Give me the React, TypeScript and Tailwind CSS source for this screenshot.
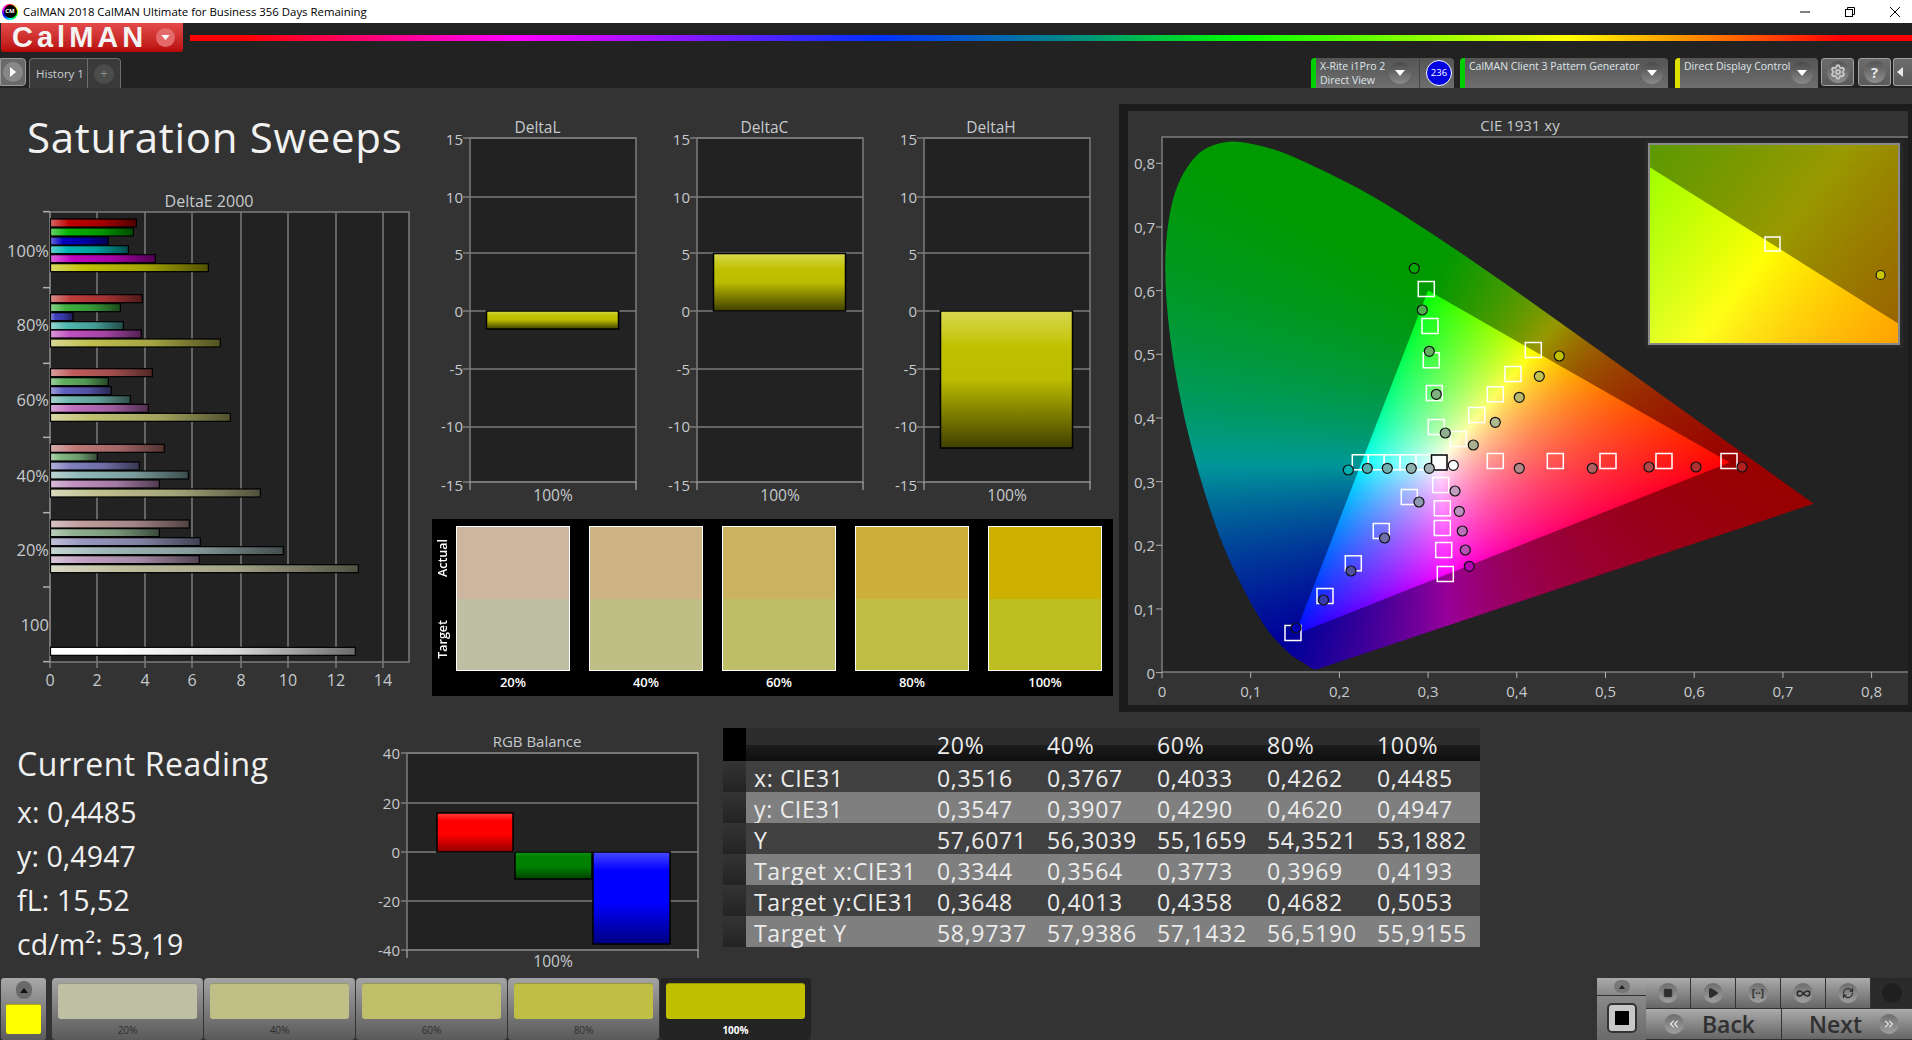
import { ChevronsLeft, ChevronsRight, Infinity as InfinityIcon, Play, RefreshCw, Settings, Square } from "lucide-react";

const TICK = "#c6cacd";
const GRID = "#7d7d7d";

// spectral locus, CIE 1931 xy
const LOCUS = [
  [0.1741, 0.005], [0.1714, 0.0051], [0.1689, 0.0069], [0.1644, 0.0109], [0.1566, 0.0177], [0.144, 0.0297],
  [0.1241, 0.0578], [0.1096, 0.0868], [0.0913, 0.1327], [0.0687, 0.2007], [0.0454, 0.295], [0.0235, 0.4127],
  [0.0082, 0.5384], [0.0039, 0.6548], [0.0139, 0.7502], [0.0389, 0.812], [0.0743, 0.8338], [0.1142, 0.8262],
  [0.1547, 0.8059], [0.2296, 0.7543], [0.3016, 0.6923], [0.3731, 0.6245], [0.4441, 0.5547], [0.5125, 0.4866],
  [0.5752, 0.4242], [0.627, 0.3725], [0.6658, 0.334], [0.6915, 0.3083], [0.719, 0.2809], [0.7347, 0.2653],
];
const sx = (x: number) => 1162 + 887 * x;
const sy = (y: number) => 672.6 - 636.6 * y;

// catmull-rom through the locus so the horseshoe stays round
function locusPath() {
  const p = LOCUS.map(([x, y]) => [sx(x), sy(y)]);
  let d = `M${p[0][0].toFixed(1)} ${p[0][1].toFixed(1)}`;
  for (let i = 0; i < p.length - 1; i++) {
    const a = p[Math.max(i - 1, 0)];
    const b = p[i];
    const c = p[i + 1];
    const e = p[Math.min(i + 2, p.length - 1)];
    const c1 = [b[0] + (c[0] - a[0]) / 6, b[1] + (c[1] - a[1]) / 6];
    const c2 = [c[0] - (e[0] - b[0]) / 6, c[1] - (e[1] - b[1]) / 6];
    d += `C${c1[0].toFixed(1)} ${c1[1].toFixed(1)} ${c2[0].toFixed(1)} ${c2[1].toFixed(1)} ${c[0].toFixed(1)} ${c[1].toFixed(1)}`;
  }
  return d + "Z";
}
const triPoints = [[0.64, 0.33], [0.3, 0.6], [0.15, 0.06]].map(([x, y]) => `${sx(x).toFixed(1)},${sy(y).toFixed(1)}`).join(" ");

function xyColor(x: number, yIn: number, k: number, gamma: number) {
  const y = Math.max(yIn, 0.004);
  const X = x / y;
  const Z = Math.max(1 - x - y, 0) / y;
  const raw = [
    3.2406 * X - 1.5372 - 0.4986 * Z,
    -0.9689 * X + 1.8758 + 0.0415 * Z,
    0.0557 * X - 0.204 + 1.057 * Z,
  ];
  const clipped = raw.map((c) => Math.max(c, 0));
  const max = Math.max(...clipped, 0.0001);
  const [r, g, b] = clipped.map((c) => Math.round(Math.pow(c / max, gamma) * k));
  return `rgb(${r},${g},${b})`;
}

function cells(x0: number, y0: number, x1: number, y1: number, step: number, k: number, gamma: number, toXy: (px: number, py: number) => [number, number], keep?: (px: number, py: number) => boolean) {
  const out = [];
  for (let py = y0; py < y1; py += step) {
    for (let px = x0; px < x1; px += step) {
      if (keep && !keep(px, py)) continue;
      const [x, y] = toXy(px + step / 2, py + step / 2);
      out.push(<rect key={`${px}-${py}`} x={px} y={py} width={step} height={step} fill={xyColor(x, y, k, gamma)} />);
    }
  }
  return out;
}

const plotXy = (px: number, py: number): [number, number] => [(px - 1162) / 887, (672.6 - py) / 636.6];
const inTriangle = (px: number, py: number) => {
  const [x, y] = plotXy(px, py);
  const pad = -0.012;
  const e1 = (0.3 - 0.64) * (y - 0.33) - (0.6 - 0.33) * (x - 0.64);
  const e2 = (0.15 - 0.3) * (y - 0.6) - (0.06 - 0.6) * (x - 0.3);
  const e3 = (0.64 - 0.15) * (y - 0.06) - (0.33 - 0.06) * (x - 0.15);
  return e1 > pad && e2 > pad && e3 > pad;
};
const insetXy = (px: number, py: number): [number, number] => [0.386 + (px - 1649) / 3700, 0.5395 - (py - 144) / 2925];

const outerCells = cells(1156, 132, 1824, 678, 6, 153, 1, plotXy);
const triCells = cells(1280, 276, 1744, 644, 3, 255, 0.8, plotXy, inTriangle);
const insetOuter = cells(1645, 140, 1903, 348, 6, 153, 1, insetXy);
const insetInner = cells(1645, 140, 1903, 348, 4, 255, 1, insetXy);

const SQUARES = [
  [1426.3, 289], [1430, 326], [1431.3, 360.3], [1434.3, 393], [1436.3, 427], [1458.3, 439], [1476.7, 415], [1495.3, 394.3],
  [1513, 374], [1533.3, 350], [1360.3, 462.3], [1376.3, 462.3], [1392.3, 462.3], [1408, 462.3], [1423.7, 462.3],
  [1440.7, 485], [1442.3, 508.3], [1442.3, 528], [1443.7, 550], [1445.3, 574], [1409.3, 497], [1381.3, 531],
  [1353.3, 563.3], [1325, 596], [1293, 633], [1495.3, 461], [1555.3, 461], [1608, 461], [1664, 461], [1729, 461],
];
const DOTS: [number, number, string][] = [
  [1414.3, 268.3, "#00a800"], [1422.3, 310, "#50b050"], [1429.3, 351.3, "#60b060"], [1436.3, 394.3, "#80b080"], [1445.3, 433, "#90b090"],
  [1559.3, 356, "#c0c000"], [1539.3, 376.3, "#c0c050"], [1519.3, 397.3, "#b8b870"], [1495.3, 422.3, "#b0b890"], [1473.3, 445, "#a8b090"],
  [1348.3, 470, "#00b0b0"], [1367.3, 468.3, "#50b0b0"], [1387.3, 468.3, "#70b0b0"], [1411.3, 468.3, "#90b0b0"], [1429.3, 468.3, "#a0b0b0"],
  [1453.3, 465.3, "#ffffff"], [1455, 491, "#c0a0c0"], [1459.3, 511.3, "#c090c0"], [1462.3, 531, "#b870b8"], [1465.3, 550, "#b850b8"], [1469.3, 566.3, "#b000b0"],
  [1296, 628, "#0000b0"], [1323.5, 600, "#3a3ab0"], [1351, 571, "#5050a0"], [1384.6, 538, "#7070a8"], [1419, 502, "#9098b0"],
  [1519.3, 468.3, "#b08888"], [1592.3, 468.3, "#b06060"], [1649, 467, "#b04848"], [1696, 467, "#b03030"], [1742, 467, "#b02020"],
];

function shade(hex: string, f: number) {
  const n = parseInt(hex.slice(1), 16);
  const ch = [n >> 16, (n >> 8) & 255, n & 255];
  const out = ch.map((c) => (f <= 1 ? c * f : c + (255 - c) * (f - 1)));
  return `rgb(${out.map((c) => Math.round(c)).join(",")})`;
}

const DE_ROWS: { label: string; labelY: number; ys: number[]; ends: number[]; colors: string[] }[] = [
  { label: "100%", labelY: 215, ys: [129, 156, 183, 209, 236, 263], ends: [409, 400, 325, 385, 466, 625], colors: ["#c00000", "#00b000", "#0000c0", "#00b4b4", "#c000c0", "#c0c000"] },
  { label: "80%", labelY: 437, ys: [356, 383, 410, 437, 462, 489], ends: [427, 361, 219, 370, 424, 661], colors: ["#c03c3c", "#40b040", "#4040c0", "#50b8b0", "#c050c0", "#c0c050"] },
  { label: "60%", labelY: 662, ys: [578, 605, 632, 659, 685, 712], ends: [457, 325, 334, 391, 445, 691], colors: ["#c05c5c", "#60b060", "#6060c0", "#70b8b0", "#c070c0", "#c0c070"] },
  { label: "40%", labelY: 888, ys: [805, 831, 858, 885, 912, 939], ends: [493, 292, 418, 565, 478, 781], colors: ["#c07878", "#80b880", "#8080c0", "#90b8b8", "#c090c0", "#c0c090"] },
  { label: "20%", labelY: 1112, ys: [1032, 1058, 1085, 1112, 1139, 1166], ends: [568, 478, 601, 850, 598, 1075], colors: ["#c09c9c", "#90b090", "#9898c0", "#a0b8b8", "#c0a0c0", "#c0c0a0"] },
];

function DeltaEChart() {
  const bars = DE_ROWS.flatMap((r) => r.ys.map((y, i) => ({ y, end: r.ends[i], color: r.colors[i] })));
  bars.push({ y: 1414, end: 1066, color: "#ffffff" });
  const xTicks = [50, 97, 145, 192, 241, 288, 336, 383];
  return (
    <svg viewBox="0 190 430 510" className="block h-[510px] w-[430px]">
      <defs>
        {bars.map((b, i) => (
          <linearGradient key={i} id={`de-${i}`} x1="0" x2="1" y1="0" y2="0">
            <stop offset="0" stopColor={shade(b.color, 1.4)} />
            <stop offset="0.22" stopColor={b.color} />
            <stop offset="0.6" stopColor={shade(b.color, 0.85)} />
            <stop offset="1" stopColor={shade(b.color, 0.42)} />
          </linearGradient>
        ))}
      </defs>
      <text x="209" y="201" fill={TICK} fontSize="16" textAnchor="middle" dominantBaseline="central">DeltaE 2000</text>
      <rect x="50" y="212" width="359" height="450" fill="#222222" stroke={GRID} strokeWidth="1.5" />
      {xTicks.map((x, i) => (
        <g key={x}>
          <line x1={x} x2={x} y1="212" y2="668" stroke={GRID} strokeWidth="1.5" />
          <text x={x} y="680" fill={TICK} fontSize="16" textAnchor="middle" dominantBaseline="central">{i * 2}</text>
        </g>
      ))}
      {[95, 323, 550, 772, 998, 1221, 1445].map((y) => (
        <line key={y} x1="43" x2="50" y1={180 + y / 3} y2={180 + y / 3} stroke="#b0b0b0" strokeWidth="1.5" />
      ))}
      {DE_ROWS.map((r) => (
        <text key={r.label} x="49" y={179 + r.labelY / 3} fill={TICK} fontSize="16.5" textAnchor="end" dominantBaseline="central">{r.label}</text>
      ))}
      <text x="49" y={179 + 1337 / 3} fill={TICK} fontSize="16.5" textAnchor="end" dominantBaseline="central">100</text>
      {bars.map((b, i) => (
        <rect key={i} x="50.5" y={180 + b.y / 3 - 4} width={b.end / 3 - 50.5} height="8" fill={`url(#de-${i})`} stroke="#000" strokeWidth="1.2" />
      ))}
    </svg>
  );
}

const GRID_Y = [138, 197, 253, 311, 369, 427, 482];
const LABEL_Y = [138.5, 197, 254, 310.5, 369, 426, 485];
const LABELS = ["15", "10", "5", "0", "-5", "-10", "-15"];

function DeltaChart({ title, titleX, y0, y1 }: { title: string; titleX: number; y0: number; y1: number }) {
  return (
    <svg viewBox="0 110 227 402" className="block h-[402px] w-[227px]">
      <defs>
        <linearGradient id={`bar-${title}`} x1="0" x2="0" y1="0" y2="1">
          <stop offset="0" stopColor="#d8d850" />
          <stop offset="0.27" stopColor="#c0c000" />
          <stop offset="0.5" stopColor="#bcbc00" />
          <stop offset="1" stopColor="#403f00" />
        </linearGradient>
      </defs>
      <text x={titleX} y="127" fill={TICK} fontSize="15.5" textAnchor="middle" dominantBaseline="central">{title}</text>
      <rect x="40" y="138" width="166" height="344" fill="#222222" stroke={GRID} strokeWidth="1.5" />
      {GRID_Y.map((y, i) => (
        <g key={y}>
          <line x1="33" x2="206" y1={y} y2={y} stroke={GRID} strokeWidth="1.5" />
          <text x="33" y={LABEL_Y[i]} fill={TICK} fontSize="15" textAnchor="end" dominantBaseline="central">{LABELS[i]}</text>
        </g>
      ))}
      <line x1="40" x2="40" y1="482" y2="490" stroke="#c0c0c0" />
      <line x1="206" x2="206" y1="482" y2="490" stroke="#c0c0c0" />
      <rect x="56.5" y={y0} width="132" height={y1 - y0} fill={`url(#bar-${title})`} stroke="#000" strokeWidth="1.5" />
      <text x="123" y="495" fill={TICK} fontSize="15.5" textAnchor="middle" dominantBaseline="central">100%</text>
    </svg>
  );
}

function RgbChart() {
  const rows = [[753, "40"], [803, "20"], [852, "0"], [901, "-20"], [950, "-40"]] as const;
  const bars = [
    { id: "r", x: 437, w: 76, y: 813, h: 39, a: "#ff4040", b: "#ff0000", c: "#900000" },
    { id: "g", x: 515, w: 77, y: 852, h: 27, a: "#109010", b: "#008000", c: "#004000" },
    { id: "b", x: 593, w: 77, y: 852, h: 92, a: "#4848ff", b: "#0000ff", c: "#000080" },
  ];
  return (
    <svg viewBox="360 730 350 245" className="block h-[245px] w-[350px] shrink-0">
      <defs>
        {bars.map((b) => (
          <linearGradient key={b.id} id={`rgb-${b.id}`} x1="0" x2="0" y1="0" y2="1">
            <stop offset="0" stopColor={b.a} />
            <stop offset="0.2" stopColor={b.b} />
            <stop offset="0.55" stopColor={b.b} />
            <stop offset="1" stopColor={b.c} />
          </linearGradient>
        ))}
      </defs>
      <text x="537" y="741" fill={TICK} fontSize="15" textAnchor="middle" dominantBaseline="central">RGB Balance</text>
      <rect x="407" y="753" width="291" height="197" fill="#222222" stroke={GRID} strokeWidth="1.5" />
      {rows.map(([y, t]) => (
        <g key={t}>
          <line x1="401" x2="698" y1={y} y2={y} stroke={GRID} strokeWidth="1.5" />
          <text x="400" y={y} fill={TICK} fontSize="15" textAnchor="end" dominantBaseline="central">{t}</text>
        </g>
      ))}
      <line x1="407" x2="407" y1="950" y2="958" stroke="#c0c0c0" />
      <line x1="698" x2="698" y1="950" y2="958" stroke="#c0c0c0" />
      {bars.map((b) => (
        <rect key={b.id} x={b.x} y={b.y} width={b.w} height={b.h} fill={`url(#rgb-${b.id})`} stroke="#000" strokeWidth="1.5" />
      ))}
      <text x="553" y="961" fill={TICK} fontSize="15.5" textAnchor="middle" dominantBaseline="central">100%</text>
    </svg>
  );
}

function CieChart() {
  const labels = ["0", "0,1", "0,2", "0,3", "0,4", "0,5", "0,6", "0,7", "0,8"];
  return (
    <svg viewBox="1128 111 780 594" className="block h-[594px] w-[780px]">
      <defs>
        <clipPath id="locus"><path d={locusPath()} /></clipPath>
        <clipPath id="tri"><polygon points={triPoints} /></clipPath>
        <clipPath id="inset"><rect x="1649" y="144" width="250" height="200" /></clipPath>
        <clipPath id="inset-in"><polygon points="1649,166.8 1899,323.9 1899,344 1649,344" /></clipPath>
        <filter id="soft-a" x="-5%" y="-5%" width="110%" height="110%" colorInterpolationFilters="sRGB"><feGaussianBlur stdDeviation="4" /></filter>
        <filter id="soft-b" x="-5%" y="-5%" width="110%" height="110%" colorInterpolationFilters="sRGB"><feGaussianBlur stdDeviation="1.5" /></filter>
        <filter id="soft-c" x="-5%" y="-5%" width="110%" height="110%" colorInterpolationFilters="sRGB"><feGaussianBlur stdDeviation="2" /></filter>
      </defs>
      <text x="1520" y="125" fill={TICK} fontSize="15" textAnchor="middle" dominantBaseline="central">CIE 1931 xy</text>
      <rect x="1162" y="137" width="750" height="535" fill="#222222" stroke={GRID} strokeWidth="1.5" />
      {labels.map((t, i) => {
        const x = sx(i / 10);
        return (
          <g key={i}>
            <line x1={x} x2={x} y1="672" y2="678" stroke="#b0b0b0" />
            <text x={x} y="691" fill={TICK} fontSize="15" textAnchor="middle" dominantBaseline="central">{t}</text>
          </g>
        );
      })}
      {labels.map((t, i) => {
        const y = sy(i / 10);
        return (
          <g key={i}>
            <line x1="1156" x2="1162" y1={y} y2={y} stroke="#b0b0b0" />
            <text x="1155" y={y} fill={TICK} fontSize="15" textAnchor="end" dominantBaseline="central">{t}</text>
          </g>
        );
      })}
      <g clipPath="url(#locus)"><g filter="url(#soft-a)" shapeRendering="crispEdges">{outerCells}</g></g>
      <g clipPath="url(#tri)"><g filter="url(#soft-b)" shapeRendering="crispEdges">{triCells}</g></g>
      {SQUARES.map(([x, y]) => (
        <rect key={`${x}-${y}`} x={x - 8} y={y - 7.5} width="16" height="15" fill="none" stroke="#fff" strokeWidth="1.5" />
      ))}
      <rect x="1431.5" y="455" width="15.5" height="15" fill="#ffffffd8" stroke="#000" strokeWidth="1.5" />
      {DOTS.map(([x, y, c]) => (
        <circle key={`${x}-${y}`} cx={x} cy={y} r="5" fill={c} stroke="#111" strokeWidth="1.2" />
      ))}
      <rect x="1645" y="141" width="258" height="207" fill="#2a2a2a" />
      <g clipPath="url(#inset)"><g filter="url(#soft-c)" shapeRendering="crispEdges">{insetOuter}</g></g>
      <g clipPath="url(#inset-in)"><g filter="url(#soft-c)" shapeRendering="crispEdges">{insetInner}</g></g>
      <rect x="1649" y="144" width="250" height="200" fill="none" stroke="#8a8a8a" strokeWidth="2" />
      <rect x="1765" y="237" width="15" height="14" fill="none" stroke="#fff" strokeWidth="1.5" />
      <circle cx="1880.6" cy="275" r="4.5" fill="#c8c800" stroke="#111" strokeWidth="1.2" />
    </svg>
  );
}

const SWATCHES = [
  { label: "20%", actual: "bg-[#ceb5a0]", target: "bg-[#bebea3]" },
  { label: "40%", actual: "bg-[#cdb384]", target: "bg-[#bfbf85]" },
  { label: "60%", actual: "bg-[#cbb25f]", target: "bg-[#bebe68]" },
  { label: "80%", actual: "bg-[#cdb03c]", target: "bg-[#bebe45]" },
  { label: "100%", actual: "bg-[#cdb000]", target: "bg-[#bebe22]" },
];

function SwatchPanel() {
  return (
    <div className="ml-[2px] mt-[7px] flex h-[177px] w-[681px] bg-black pl-[2px] pt-[7px] text-white">
      <div className="flex h-[161px] w-[22px] shrink-0 flex-col text-[12.5px] font-semibold">
        <div className="flex h-[65px] items-center"><span className="rotate-180 [writing-mode:vertical-rl]">Actual</span></div>
        <div className="flex h-[96px] items-center"><span className="rotate-180 [writing-mode:vertical-rl]">Target</span></div>
      </div>
      <div className="flex">
        {SWATCHES.map((s) => (
          <div key={s.label} className="ml-[19px] w-[114px] first:ml-0">
            <div className="flex h-[145px] flex-col border border-white">
              <div className={`h-[72px] ${s.actual}`} />
              <div className={`flex-1 ${s.target}`} />
            </div>
            <div className="mt-[2px] text-center text-[13px] font-semibold leading-[18px]">{s.label}</div>
          </div>
        ))}
      </div>
    </div>
  );
}

const TABLE = [
  { name: "x: CIE31", vals: ["0,3516", "0,3767", "0,4033", "0,4262", "0,4485"], bg: "bg-[#404040]" },
  { name: "y: CIE31", vals: ["0,3547", "0,3907", "0,4290", "0,4620", "0,4947"], bg: "bg-[#7f7f7f]" },
  { name: "Y", vals: ["57,6071", "56,3039", "55,1659", "54,3521", "53,1882"], bg: "bg-[#404040]" },
  { name: "Target x:CIE31", vals: ["0,3344", "0,3564", "0,3773", "0,3969", "0,4193"], bg: "bg-[#7f7f7f]" },
  { name: "Target y:CIE31", vals: ["0,3648", "0,4013", "0,4358", "0,4682", "0,5053"], bg: "bg-[#404040]" },
  { name: "Target Y", vals: ["58,9737", "57,9386", "57,1432", "56,5190", "55,9155"], bg: "bg-[#7f7f7f]" },
];

function ReadingsTable() {
  return (
    <div className="ml-[13px] mt-[16px] w-[757px] shrink-0 text-[23px] tracking-[0.7px] text-[#ececec]">
      <div className="flex h-[33px]">
        <div className="w-[23px] shrink-0 bg-black" />
        <div className="grid flex-1 grid-cols-[191px_110px_110px_110px_110px_103px] items-center bg-[linear-gradient(to_bottom,#2c2c2c_50%,#1c1c1c_52%,#0e0e0e)]">
          <div />
          {SWATCHES.map((s) => <div key={s.label}>{s.label}</div>)}
        </div>
      </div>
      {TABLE.map((row) => (
        <div key={row.name} className="flex h-[31px]">
          <div className="w-[23px] shrink-0 bg-linear-to-b from-[#343434] to-[#232323]" />
          <div className={`grid flex-1 grid-cols-[191px_110px_110px_110px_110px_103px] items-center ${row.bg}`}>
            <div className="whitespace-nowrap pl-[8px]">{row.name}</div>
            {row.vals.map((v) => <div key={v} className="whitespace-nowrap">{v}</div>)}
          </div>
        </div>
      ))}
    </div>
  );
}

function DropCircle() {
  return (
    <div className="flex h-[22px] w-[22px] shrink-0 items-center justify-center rounded-full bg-linear-to-b from-[#4a4a4a] to-[#8a8a8a]">
      <svg viewBox="0 0 10 6" className="h-[6px] w-[10px]"><polygon points="0,0 10,0 5,6" fill="#fff" /></svg>
    </div>
  );
}

function ToolButton({ children, className = "" }: { children: React.ReactNode; className?: string }) {
  return (
    <div className={`flex h-[28px] items-center justify-center rounded-[3px] border border-[#a0a0a0] bg-linear-to-b from-[#6c6c6c] to-[#5a5a5a] ${className}`}>
      {children}
    </div>
  );
}

function InstrumentTab({ strip, width, children, right }: { strip: string; width: string; children: React.ReactNode; right: React.ReactNode }) {
  return (
    <div className={`flex h-[30px] items-start overflow-hidden rounded-t-[4px] bg-linear-to-b from-[#555555] to-[#6e6e6e] ${width}`}>
      <div className={`h-full w-[5px] ${strip}`} />
      <div className="min-w-0 flex-1 pl-[4px] pt-px text-[10.5px] leading-[14px] text-[#dfe6ea] whitespace-nowrap">{children}</div>
      {right}
    </div>
  );
}

function Toolbar() {
  const toolRound = "flex h-[22px] w-[22px] items-center justify-center rounded-full bg-linear-to-b from-[#555555] to-[#8e8e8e]";
  return (
    <div className="h-[65px] shrink-0 bg-[#222222]">
      <div className="flex h-[29px] items-center">
        <div className="ml-[1px] flex h-[29px] w-[182px] items-center rounded-b-[3px] bg-linear-to-b from-[#e44a4a] to-[#b80606] pl-[11px] font-['Liberation_Sans',sans-serif]">
          <span className="text-[29px] font-bold leading-none tracking-[4px] text-[#f4f4f4]">CalMAN</span>
          <div className="ml-[9px] flex h-[19px] w-[19px] items-center justify-center rounded-full bg-[#e46a6a]">
            <svg viewBox="0 0 10 6" className="h-[5px] w-[9px]"><polygon points="0,0 10,0 5,6" fill="#fff" /></svg>
          </div>
        </div>
        <div className="ml-[7px] h-[6px] flex-1 bg-[linear-gradient(to_right,#ff0000_3%,#ff00ff_19%,#0030ff_40%,#008888_51%,#00ff00_61%,#ffff00_80%,#ff0000_96%)]" />
      </div>
      <div className="mt-[6px] flex h-[30px]">
        <div className="flex h-[28px] w-[26px] items-center justify-center rounded-r-[4px] border border-[#9a9a9a] bg-[#6a6a6a]">
          <div className="flex h-[20px] w-[20px] items-center justify-center rounded-full bg-[#888888]">
            <svg viewBox="0 0 6 10" className="h-[10px] w-[6px]"><polygon points="0,0 6,5 0,10" fill="#fff" /></svg>
          </div>
        </div>
        <div className="ml-[3px] flex h-[30px] w-[92px] items-center rounded-t-[4px] border border-b-0 border-[#6e6e6e] bg-[#3a3a3a] text-[11.5px] text-[#c8d0d4]">
          <div className="flex h-full w-[58px] items-center border-r border-[#6e6e6e] pl-[6px] whitespace-nowrap">History 1</div>
          <div className="flex flex-1 justify-center">
            <div className="flex h-[20px] w-[20px] items-center justify-center rounded-full bg-[#4c4c4c] text-[13px] leading-none text-[#8a8a8a]">+</div>
          </div>
        </div>
        <div className="ml-auto flex">
          <InstrumentTab
            strip="bg-[#00d000]"
            width="w-[143px]"
            right={
              <div className="flex h-full items-center">
                <DropCircle />
                <div className="ml-[8px] h-full w-px bg-[#444444]" />
                <div className="ml-[6px] mr-[2px] flex h-[26px] w-[26px] items-center justify-center rounded-full border border-white bg-[#0000e0] text-[9.5px] text-white">236</div>
              </div>
            }
          >
            X-Rite i1Pro 2<br />Direct View
          </InstrumentTab>
          <div className="ml-[6px]">
            <InstrumentTab strip="bg-[#00d000]" width="w-[208px]" right={<div className="mr-[5px] flex h-full items-center"><DropCircle /></div>}>
              CalMAN Client 3 Pattern Generator
            </InstrumentTab>
          </div>
          <div className="ml-[7px]">
            <InstrumentTab strip="bg-[#e0e000]" width="w-[143px]" right={<div className="mr-[5px] flex h-full items-center"><DropCircle /></div>}>
              Direct Display Control
            </InstrumentTab>
          </div>
          <ToolButton className="ml-[3px] w-[33px]"><div className={toolRound}><Settings size={16} className="text-[#c4c4c4]" strokeWidth={3} /></div></ToolButton>
          <ToolButton className="ml-[4px] w-[33px]"><div className={toolRound}><span className="text-[15px] font-bold leading-none text-[#e6e6e6]">?</span></div></ToolButton>
          <ToolButton className="ml-[2px] w-[19px] justify-start rounded-r-none border-r-0">
            <svg viewBox="0 0 6 10" className="ml-[3px] h-[10px] w-[6px]"><polygon points="6,0 0,5 6,10" fill="#e8e8e8" /></svg>
          </ToolButton>
        </div>
      </div>
    </div>
  );
}

function TitleBar() {
  return (
    <div className="flex h-[23px] shrink-0 items-center bg-white text-[11.4px] text-black">
      <div className="ml-[2px] flex h-[16px] w-[16px] items-center justify-center rounded-full bg-[conic-gradient(#f00,#ff0,#0f0,#0ff,#00f,#f0f,#f00)]">
        <div className="flex h-[13px] w-[13px] items-center justify-center rounded-full bg-black text-[6px] font-bold text-white">CM</div>
      </div>
      <span className="ml-[5px] whitespace-nowrap">CalMAN 2018 CalMAN Ultimate for Business 356 Days Remaining</span>
      <div className="ml-auto flex items-center">
        <svg viewBox="0 0 10 10" className="h-[10px] w-[10px]"><line x1="0" x2="10" y1="5" y2="5" stroke="#000" /></svg>
        <svg viewBox="0 0 10 10" className="ml-[35px] h-[10px] w-[10px]" fill="none" stroke="#000"><rect x="0.5" y="2.5" width="7" height="7" /><path d="M2.5 2.5V0.5H9.5V7.5H7.5" /></svg>
        <svg viewBox="0 0 10 10" className="ml-[35px] mr-[12px] h-[10px] w-[10px]" stroke="#000"><path d="M0 0L10 10M10 0L0 10" /></svg>
      </div>
    </div>
  );
}

const TILES = [
  { label: "20%", color: "bg-[#bfbfa4]" },
  { label: "40%", color: "bg-[#c0c086]" },
  { label: "60%", color: "bg-[#bfbf69]" },
  { label: "80%", color: "bg-[#bfbf46]" },
];

const NAV_BTN = "flex h-[30px] items-center justify-center border-r border-[#333333] bg-linear-to-b from-[#ababab] to-[#666666]";
const ROUND = "flex h-[20px] w-[20px] items-center justify-center rounded-full bg-linear-to-b from-[#6e6e6e] to-[#a0a0a0] text-[#2c2c2c]";

function BottomBar() {
  return (
    <div className="flex h-[62px] shrink-0 bg-[#333333]">
      <div className="ml-[1px] flex w-[45px] flex-col items-center rounded-[3px] bg-linear-to-b from-[#a8a8a8] to-[#5c5c5c] pt-[3px]">
        <div className="flex h-[18px] w-[16px] items-center justify-center rounded-full bg-[#6a6a6a]">
          <svg viewBox="0 0 8 5" className="h-[5px] w-[8px]"><polygon points="0,5 8,5 4,0" fill="#111" /></svg>
        </div>
        <div className="mt-[5px] h-[30px] w-[35px] rounded-[2px] border-t border-[#b0b000] bg-[#ffff00]" />
      </div>
      <div className="ml-[6px] flex gap-px">
        {TILES.map((t) => (
          <div key={t.label} className="w-[151px] rounded-[4px] bg-linear-to-b from-[#a4a4a4] to-[#5a5a5a] px-[6px] pt-[5px]">
            <div className={`h-[36px] rounded-[3px] border-t border-black/20 ${t.color}`} />
            <div className="mt-[4px] text-center text-[10px] leading-[14px] text-[#2e2e2e]">{t.label}</div>
          </div>
        ))}
        <div className="w-[151px] rounded-[4px] bg-[#242424] px-[6px] pt-[5px]">
          <div className="h-[36px] rounded-[3px] border-t border-black/20 bg-[#bfbf00]" />
          <div className="mt-[4px] text-center text-[10px] font-bold leading-[14px] text-white">100%</div>
        </div>
      </div>
      <div className="ml-auto flex">
        <div className="flex w-[49px] flex-col rounded-tl-[3px] bg-[#8a8a8a]">
          <div className="flex h-[18px] items-center justify-center border-b border-[#333333] bg-linear-to-b from-[#aaaaaa] to-[#888888]">
            <div className="flex h-[13px] w-[16px] items-center justify-center rounded-full bg-[#777777]">
              <svg viewBox="0 0 8 5" className="h-[4px] w-[8px]"><polygon points="0,5 8,5 4,0" fill="#222" /></svg>
            </div>
          </div>
          <div className="flex flex-1 items-center justify-center bg-linear-to-b from-[#8a8a8a] to-[#6a6a6a]">
            <div className="flex h-[30px] w-[30px] items-center justify-center rounded-[5px] border-2 border-[#333333] bg-[#c8c8c8]">
              <div className="h-[14px] w-[14px] bg-black" />
            </div>
          </div>
        </div>
        <div className="flex w-[266px] flex-col">
          <div className="flex h-[30px]">
            {[
              <Square key="s" size={10} fill="currentColor" />,
              <Play key="p" size={12} fill="currentColor" />,
              <span key="b" className="text-[10px] font-bold leading-none">[··]</span>,
              <InfinityIcon key="i" size={15} strokeWidth={2.5} />,
              <RefreshCw key="r" size={12} strokeWidth={2.5} />,
            ].map((icon, i) => (
              <div key={i} className={`${NAV_BTN} w-[45px]`}><div className={ROUND}>{icon}</div></div>
            ))}
            <div className="flex flex-1 items-center justify-center bg-[#2a2a2a]"><div className="h-[20px] w-[20px] rounded-full bg-[#1f1f1f]" /></div>
          </div>
          <div className="flex h-[31px] border-t border-[#333333] text-[23px] font-semibold text-[#303030]">
            <div className={`${NAV_BTN} w-[136px]`}>
              <div className={`${ROUND} mr-[18px] text-[#e8e8e8]`}><ChevronsLeft size={14} /></div>
              <span className="mr-[8px]">Back</span>
            </div>
            <div className={`${NAV_BTN} flex-1 border-r-0`}>
              <span className="ml-[14px]">Next</span>
              <div className={`${ROUND} ml-[17px] text-[#e8e8e8]`}><ChevronsRight size={14} /></div>
            </div>
          </div>
        </div>
      </div>
    </div>
  );
}

export default function App() {
  return (
    <div className="flex h-[1040px] w-[1912px] flex-col overflow-hidden bg-[#333333] font-['Open_Sans','Noto_Sans',sans-serif]">
      <TitleBar />
      <Toolbar />
      <div className="flex h-[624px] shrink-0">
        <div className="w-[430px] shrink-0">
          <h1 className="ml-[27px] mt-[24px] h-[50px] whitespace-nowrap text-[42px] leading-[50px] tracking-[0.7px] text-[#f2f2f2]">Saturation Sweeps</h1>
          <div className="mt-[28px]"><DeltaEChart /></div>
        </div>
        <div className="w-[689px] shrink-0 pt-[22px]">
          <div className="flex">
            <DeltaChart title="DeltaL" titleX={107.5} y0={311} y1={329} />
            <DeltaChart title="DeltaC" titleX={107.5} y0={253.5} y1={311} />
            <DeltaChart title="DeltaH" titleX={107} y0={311} y1={448} />
          </div>
          <SwatchPanel />
        </div>
        <div className="mt-[16px] h-[608px] w-[793px] border-y-[7px] border-l-[9px] border-r-[4px] border-[#1c1c1c] bg-[#333333]">
          <CieChart />
        </div>
      </div>
      <div className="flex flex-1">
        <div className="w-[360px] shrink-0 pl-[17px] pt-[33px] text-[#f0f0f0]">
          <h2 className="whitespace-nowrap text-[32px] leading-[38px] tracking-[0.55px]">Current Reading</h2>
          <div className="mt-[7px] whitespace-nowrap text-[28.5px] leading-[44px] tracking-[0.1px]">
            <div>x: 0,4485</div>
            <div>y: 0,4947</div>
            <div>fL: 15,52</div>
            <div>cd/m²: 53,19</div>
          </div>
        </div>
        <div className="mt-[18px]"><RgbChart /></div>
        <ReadingsTable />
      </div>
      <BottomBar />
    </div>
  );
}
